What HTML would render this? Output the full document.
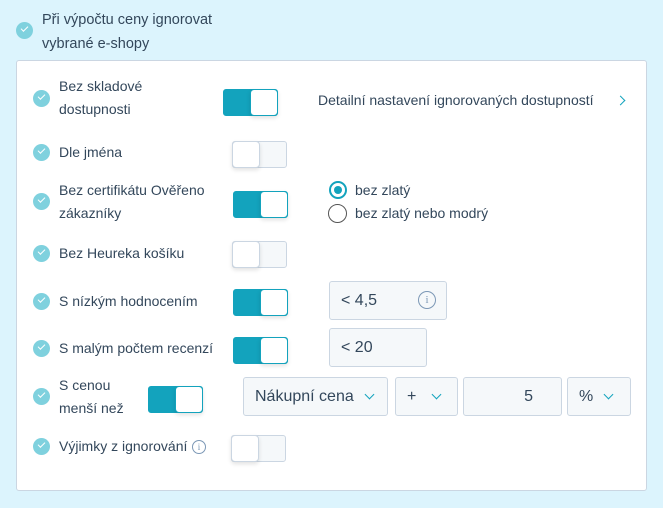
<!DOCTYPE html>
<html><head><meta charset="utf-8"><style>
*{box-sizing:border-box;margin:0;padding:0}
body{width:663px;height:508px;background:#dcf4fd;font-family:"Liberation Sans",sans-serif;color:#33475b;font-size:14px;position:relative;overflow:hidden}
.a{position:absolute}
.card{left:16px;top:60px;width:631px;height:431px;background:#fff;border:1px solid #cbd6e2;border-radius:3px}
.ck{position:absolute;width:17px;height:17px;border-radius:50%;background:#7fd1de}
.ck:after{content:"";position:absolute;left:5px;top:4px;width:6px;height:3px;border-left:1.5px solid #fff;border-bottom:1.5px solid #fff;transform:rotate(-45deg)}
.t{position:absolute;line-height:23px;font-size:14px}
.tg{position:absolute;width:55px;height:27px;border-radius:3px;background:#f5f8fa;border:1px solid #cbd6e2}
.tg .k{position:absolute;top:-1px;left:-1px;width:28px;height:27px;background:#fff;border:1px solid #cbd6e2;border-radius:4px;box-shadow:0 2px 4px rgba(0,0,0,.12)}
.tg.on{background:#13a3bd;border-color:#13a3bd}
.tg.on .k{left:auto;right:-1px;border-color:#13a3bd}
.in{position:absolute;background:#f5f8fa;border:1px solid #cbd6e2;border-radius:3px;font-size:16px;line-height:37px;padding-left:11px}
.cv{display:inline-block;width:7px;height:7px;border-right:1.5px solid #13a3bd;border-bottom:1.5px solid #13a3bd;transform:rotate(45deg);position:absolute;top:13px}
</style></head><body>
<div class="ck" style="left:16px;top:22px"></div>
<div class="t" style="left:42px;top:8px;line-height:24px;font-size:14.5px">Při výpočtu ceny ignorovat<br>vybrané e-shopy</div>
<div class="a card"></div>

<div class="ck" style="left:33px;top:90px"></div>
<div class="t" style="left:59px;top:75px">Bez skladové<br>dostupnosti</div>
<div class="tg on" style="left:223px;top:89px"><div class="k"></div></div>
<div class="t" style="left:318px;top:89px">Detailní nastavení ignorovaných dostupností</div>
<div class="a" style="left:617px;top:97px;width:7px;height:7px;border-right:1.5px solid #13a3bd;border-top:1.5px solid #13a3bd;transform:rotate(45deg)"></div>

<div class="ck" style="left:33px;top:144px"></div>
<div class="t" style="left:59px;top:141px">Dle jména</div>
<div class="tg" style="left:232px;top:141px"><div class="k"></div></div>

<div class="ck" style="left:33px;top:193px"></div>
<div class="t" style="left:59px;top:179px">Bez certifikátu Ověřeno<br>zákazníky</div>
<div class="tg on" style="left:233px;top:191px"><div class="k"></div></div>
<div class="a" style="left:329px;top:181px;width:18px;height:18px;border-radius:50%;border:2px solid #13a3bd"><div class="a" style="left:3px;top:3px;width:8px;height:8px;border-radius:50%;background:#13a3bd"></div></div>
<div class="t" style="left:355px;top:179px">bez zlatý</div>
<div class="a" style="left:328px;top:204px;width:19px;height:19px;border-radius:50%;border:1.5px solid #555"></div>
<div class="t" style="left:355px;top:202px">bez zlatý nebo modrý</div>

<div class="ck" style="left:33px;top:245px"></div>
<div class="t" style="left:59px;top:242px">Bez Heureka košíku</div>
<div class="tg" style="left:232px;top:241px"><div class="k"></div></div>

<div class="ck" style="left:33px;top:293px"></div>
<div class="t" style="left:59px;top:290px">S nízkým hodnocením</div>
<div class="tg on" style="left:233px;top:289px"><div class="k"></div></div>
<div class="in" style="left:329px;top:281px;width:118px;height:39px">&lt; 4,5<span class="a" style="left:88px;top:9px;width:18px;height:18px;border:1px solid #7c98b6;border-radius:50%;font-size:11px;line-height:16px;text-align:center;color:#7c98b6;font-family:'Liberation Serif',serif">i</span></div>

<div class="ck" style="left:33px;top:340px"></div>
<div class="t" style="left:59px;top:337px">S malým počtem recenzí</div>
<div class="tg on" style="left:233px;top:337px"><div class="k"></div></div>
<div class="in" style="left:329px;top:328px;width:98px;height:39px">&lt; 20</div>

<div class="ck" style="left:33px;top:388px"></div>
<div class="t" style="left:59px;top:374px">S cenou<br>menší než</div>
<div class="tg on" style="left:148px;top:386px"><div class="k"></div></div>
<div class="in" style="left:243px;top:377px;width:145px;height:39px">Nákupní cena<span class="cv" style="left:122px"></span></div>
<div class="in" style="left:395px;top:377px;width:63px;height:39px">+<span class="cv" style="left:37px"></span></div>
<div class="in" style="left:463px;top:377px;width:99px;height:39px;text-align:right;padding-right:28px">5</div>
<div class="in" style="left:567px;top:377px;width:64px;height:39px">%<span class="cv" style="left:37px"></span></div>

<div class="ck" style="left:33px;top:438px"></div>
<div class="t" style="left:59px;top:435px">Výjimky z ignorování</div>
<div class="a" style="left:192px;top:440px;width:14px;height:14px;border:1px solid #7c98b6;border-radius:50%;font-size:9px;line-height:12px;text-align:center;color:#7c98b6;font-family:'Liberation Serif',serif">i</div>
<div class="tg" style="left:231px;top:435px"><div class="k"></div></div>
</body></html>
